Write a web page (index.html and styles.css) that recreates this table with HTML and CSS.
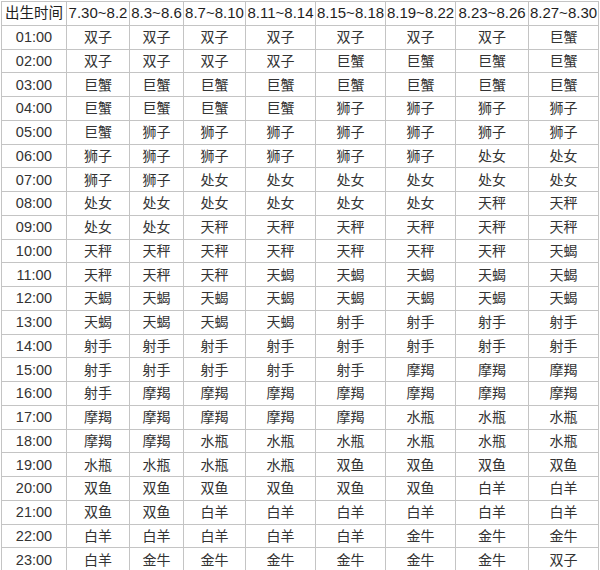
FILE: index.html
```html
<!DOCTYPE html>
<html lang="zh">
<head>
<meta charset="utf-8">
<title>出生时间星座表</title>
<link rel="stylesheet" href="styles.css">
</head>
<body>
<table class="tbl">
<colgroup>
<col class="c1"><col class="c2"><col class="c3"><col class="c4"><col class="c5"><col class="c6"><col class="c7"><col class="c8"><col class="c9">
</colgroup>
<thead>
<tr><th class="first">出生时间</th><th>7.30~8.2</th><th>8.3~8.6</th><th>8.7~8.10</th><th>8.11~8.14</th><th>8.15~8.18</th><th>8.19~8.22</th><th>8.23~8.26</th><th>8.27~8.30</th></tr>
</thead>
<tbody>
<tr><td class="time">01:00</td><td>双子</td><td>双子</td><td>双子</td><td>双子</td><td>双子</td><td>双子</td><td>双子</td><td>巨蟹</td></tr>
<tr><td class="time">02:00</td><td>双子</td><td>双子</td><td>双子</td><td>双子</td><td>巨蟹</td><td>巨蟹</td><td>巨蟹</td><td>巨蟹</td></tr>
<tr><td class="time">03:00</td><td>巨蟹</td><td>巨蟹</td><td>巨蟹</td><td>巨蟹</td><td>巨蟹</td><td>巨蟹</td><td>巨蟹</td><td>巨蟹</td></tr>
<tr><td class="time">04:00</td><td>巨蟹</td><td>巨蟹</td><td>巨蟹</td><td>巨蟹</td><td>狮子</td><td>狮子</td><td>狮子</td><td>狮子</td></tr>
<tr><td class="time">05:00</td><td>巨蟹</td><td>狮子</td><td>狮子</td><td>狮子</td><td>狮子</td><td>狮子</td><td>狮子</td><td>狮子</td></tr>
<tr><td class="time">06:00</td><td>狮子</td><td>狮子</td><td>狮子</td><td>狮子</td><td>狮子</td><td>狮子</td><td>处女</td><td>处女</td></tr>
<tr><td class="time">07:00</td><td>狮子</td><td>狮子</td><td>处女</td><td>处女</td><td>处女</td><td>处女</td><td>处女</td><td>处女</td></tr>
<tr><td class="time">08:00</td><td>处女</td><td>处女</td><td>处女</td><td>处女</td><td>处女</td><td>处女</td><td>天秤</td><td>天秤</td></tr>
<tr><td class="time">09:00</td><td>处女</td><td>处女</td><td>天秤</td><td>天秤</td><td>天秤</td><td>天秤</td><td>天秤</td><td>天秤</td></tr>
<tr><td class="time">10:00</td><td>天秤</td><td>天秤</td><td>天秤</td><td>天秤</td><td>天秤</td><td>天秤</td><td>天秤</td><td>天蝎</td></tr>
<tr><td class="time">11:00</td><td>天秤</td><td>天秤</td><td>天秤</td><td>天蝎</td><td>天蝎</td><td>天蝎</td><td>天蝎</td><td>天蝎</td></tr>
<tr><td class="time">12:00</td><td>天蝎</td><td>天蝎</td><td>天蝎</td><td>天蝎</td><td>天蝎</td><td>天蝎</td><td>天蝎</td><td>天蝎</td></tr>
<tr><td class="time">13:00</td><td>天蝎</td><td>天蝎</td><td>天蝎</td><td>天蝎</td><td>射手</td><td>射手</td><td>射手</td><td>射手</td></tr>
<tr><td class="time">14:00</td><td>射手</td><td>射手</td><td>射手</td><td>射手</td><td>射手</td><td>射手</td><td>射手</td><td>射手</td></tr>
<tr><td class="time">15:00</td><td>射手</td><td>射手</td><td>射手</td><td>射手</td><td>射手</td><td>摩羯</td><td>摩羯</td><td>摩羯</td></tr>
<tr><td class="time">16:00</td><td>射手</td><td>摩羯</td><td>摩羯</td><td>摩羯</td><td>摩羯</td><td>摩羯</td><td>摩羯</td><td>摩羯</td></tr>
<tr><td class="time">17:00</td><td>摩羯</td><td>摩羯</td><td>摩羯</td><td>摩羯</td><td>摩羯</td><td>水瓶</td><td>水瓶</td><td>水瓶</td></tr>
<tr><td class="time">18:00</td><td>摩羯</td><td>摩羯</td><td>水瓶</td><td>水瓶</td><td>水瓶</td><td>水瓶</td><td>水瓶</td><td>水瓶</td></tr>
<tr><td class="time">19:00</td><td>水瓶</td><td>水瓶</td><td>水瓶</td><td>水瓶</td><td>双鱼</td><td>双鱼</td><td>双鱼</td><td>双鱼</td></tr>
<tr><td class="time">20:00</td><td>双鱼</td><td>双鱼</td><td>双鱼</td><td>双鱼</td><td>双鱼</td><td>双鱼</td><td>白羊</td><td>白羊</td></tr>
<tr><td class="time">21:00</td><td>双鱼</td><td>双鱼</td><td>白羊</td><td>白羊</td><td>白羊</td><td>白羊</td><td>白羊</td><td>白羊</td></tr>
<tr><td class="time">22:00</td><td>白羊</td><td>白羊</td><td>白羊</td><td>白羊</td><td>白羊</td><td>金牛</td><td>金牛</td><td>金牛</td></tr>
<tr><td class="time">23:00</td><td>白羊</td><td>金牛</td><td>金牛</td><td>金牛</td><td>金牛</td><td>金牛</td><td>金牛</td><td>双子</td></tr>
</tbody>
</table>
</body>
</html>
```
FILE: styles.css
```css
html, body {
  margin: 0;
  padding: 0;
  background: #ffffff;
}
body {
  padding: 1px 0 0 1px;
  font-family: "Liberation Sans", Arial, "Noto Sans CJK SC", sans-serif;
  color: #2a2a2a;
}
.tbl {
  border-collapse: collapse;
  table-layout: fixed;
  width: 598px;
}
.c1 { width: 65px; }
.c2 { width: 63px; }
.c3 { width: 54px; }
.c4 { width: 62px; }
.c5 { width: 70px; }
.c6 { width: 70px; }
.c7 { width: 70px; }
.c8 { width: 73px; }
.c9 { width: 70px; }
.tbl tr {
  height: 23.75px;
}
.tbl th,
.tbl td {
  border: 1px solid #c4c4c4;
  padding: 0;
  text-align: center;
  vertical-align: middle;
  white-space: nowrap;
  overflow: hidden;
  line-height: 20px;
}
.tbl th {
  font-weight: normal;
  font-size: 15px;
  color: #1e1e1e;
}
.tbl th.first {
  font-size: 14.5px;
}
.tbl td {
  font-size: 14px;
  color: #333333;
}
.tbl td.time {
  font-size: 14.5px;
}
```
